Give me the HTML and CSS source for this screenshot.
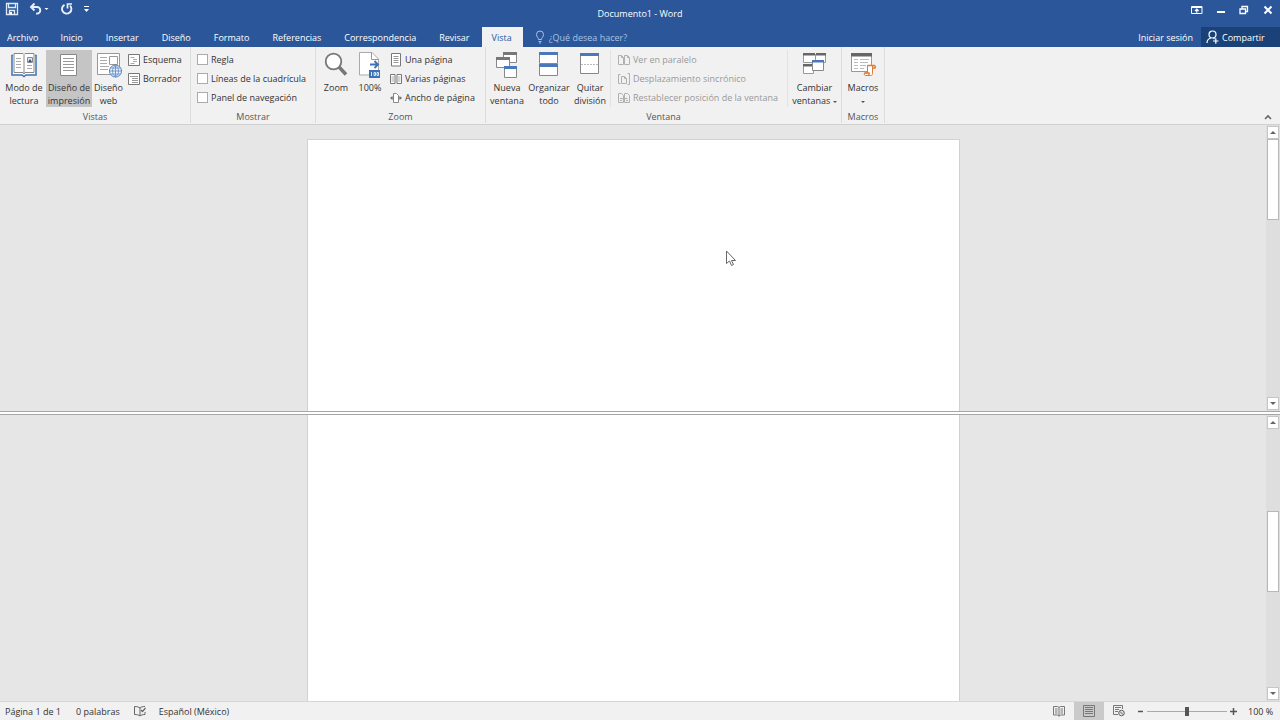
FILE: index.html
```html
<!DOCTYPE html>
<html lang="es">
<head>
<meta charset="utf-8">
<title>Documento1 - Word</title>
<link rel="stylesheet" href="styles.css">
</head>
<body>
<div class="app">
  <header class="titlebar">
    <div class="quick">
      <button class="tb" aria-label="Guardar"><svg width="14" height="14" viewBox="0 0 14 14"><path d="M1.500 1.500h11v11h-11z M3.500 1.500v4h7v-4 M4.500 12.500v-4h5v4" fill="none" stroke="#dfe8f6" stroke-width="1.300"/><path d="M5 10h2v2.500H5z" fill="#fff"/></svg></button>
      <button class="tb undo" aria-label="Deshacer"><svg width="20" height="14" viewBox="0 0 20 14"><path d="M2 5h6a3.300 3.300 0 0 1 0 6.600H7" fill="none" stroke="#e8effa" stroke-width="1.900"/><path d="M5.500 1.500 2 5l3.500 3.500" fill="none" stroke="#e8effa" stroke-width="1.900"/><path d="M15.500 6h4l-2 2z" fill="#fff"/></svg></button>
      <button class="tb redo" aria-label="Rehacer"><svg width="14" height="14" viewBox="0 0 14 14"><path d="M4.500 2.800A4.700 4.700 0 1 0 10 3.600" fill="none" stroke="#e8effa" stroke-width="1.900"/><path d="M7.500 6.500V2h4.500" fill="none" stroke="#e8effa" stroke-width="1.700"/></svg></button>
      <button class="tb" aria-label="Personalizar"><svg width="8" height="10" viewBox="0 0 8 10"><path d="M2 2.500h5" stroke="#fff"/><path d="M2 5h5L4.500 8z" fill="#fff"/></svg></button>
    </div>
    <h1 class="doc-title">Documento1 - Word</h1>
    <div class="window-controls">
      <button class="tb" aria-label="Opciones de la cinta"><svg width="12" height="10" viewBox="0 0 12 10"><path d="M.5 1.500h10.500v7H.5z M.5 2.500H11" fill="none" stroke="#fff"/><path d="M5.800 7.800V5 M4 6l1.800-1.800L7.600 6" fill="none" stroke="#fff" stroke-width="1.200"/></svg></button>
      <button class="tb" aria-label="Minimizar"><svg width="8" height="10" viewBox="0 0 8 10"><path d="M0 7h8" stroke="#fff" stroke-width="2"/></svg></button>
      <button class="tb" aria-label="Restaurar"><svg width="10" height="10" viewBox="0 0 10 10"><path d="M1 4h5.500v4.500H1z M3 4V1.500h5.500V6.500H6.500" fill="none" stroke="#fff" stroke-width="1.300"/></svg></button>
      <button class="tb" aria-label="Cerrar"><svg width="10" height="10" viewBox="0 0 10 10"><path d="m1.500 1.500 7 7 m0-7-7 7" stroke="#fff" stroke-width="2"/></svg></button>
    </div>
  </header>
  <nav class="tabs">
    <button class="tab file">Archivo</button>
    <button class="tab">Inicio</button>
    <button class="tab">Insertar</button>
    <button class="tab">Diseño</button>
    <button class="tab">Formato</button>
    <button class="tab">Referencias</button>
    <button class="tab">Correspondencia</button>
    <button class="tab">Revisar</button>
    <button class="tab active">Vista</button>
    <label class="tell"><svg width="10" height="14" viewBox="0 0 10 14"><path d="M3.500 9.500C3.500 7.500 1.500 7 1.500 4.500a3.500 3.500 0 0 1 7 0C8.500 7 6.500 7.500 6.500 9.500z M3.500 11.500h3 M4 13h2" fill="none" stroke="#a9c0e4"/></svg><input type="text" placeholder="¿Qué desea hacer?" aria-label="¿Qué desea hacer?"></label>
    <button class="tab signin">Iniciar sesión</button>
    <button class="share"><svg width="13" height="14" viewBox="0 0 13 14"><circle cx="6.500" cy="4.500" r="3.500" fill="none" stroke="#fff" stroke-width="1.200"/><path d="M1 13c0-3 2-4.500 4-5 M7.500 8l1 1 M7 11h5.500 M9.800 8.200v5.500" fill="none" stroke="#fff" stroke-width="1.200"/></svg>Compartir</button>
  </nav>
  <section class="ribbon">
    <div class="group g-views">
      <div class="tools">
        <button class="big w44"><svg width="26" height="26" viewBox="0 0 26 26"><path d="M2 3.500h-1v19.500h10l2 1.500 2-1.500h10V3.500h-1" fill="#fff" stroke="#3d72b5" stroke-width="1.500"/><path d="M3 1.500h9l1 1 1-1h9v19h-9l-1 1.500-1-1.500H3z" fill="#fff" stroke="#888"/><path d="M13 3v19" stroke="#888"/><path d="M5 6.500h5 M5 9.500h5 M5 12.500h5 M5 15.500h5 M16 13.500h5 M16 16.500h5" stroke="#aaa"/><path d="M16.500 5.500h5v5h-5z" fill="#dce8f5" stroke="#888"/><path d="m17 10 2-3 2 3z" fill="#24588f"/></svg><span>Modo de<br>lectura</span></button>
        <button class="big w46 pressed"><svg width="26" height="26" viewBox="0 0 26 26"><path d="M4.500 2.500h16v21h-16z" fill="#fff" stroke="#888"/><path d="M7 6.500h11 M7 9.500h11 M7 12.500h11 M7 15.500h11 M7 18.500h11" stroke="#999"/></svg><span>Diseño de<br>impresión</span></button>
        <button class="big w33"><svg width="26" height="26" viewBox="0 0 26 26"><path d="M1.500 1.500h22v21h-22z" fill="#fff" stroke="#999"/><path d="M4 5.500h7 M4 8.500h7 M4 11.500h7 M4 14.500h9 M4 17.500h8" stroke="#aaa"/><path d="M13.500 4.500h8v8h-8z" fill="#fff" stroke="#999"/><circle cx="19.500" cy="19" r="6" fill="#f2f6fb" stroke="#4b7fbd"/><path d="M13.500 19h12 M14.500 16h10 M14.500 22h10 M19.500 13v12 M19.500 13c-4 3-4 9 0 12 M19.500 13c4 3 4 9 0 12" fill="none" stroke="#6d98cc"/></svg><span>Diseño<br>web</span></button>
        <div class="stack">
          <button class="small"><svg width="12" height="12" viewBox="0 0 12 12"><path d="M.5.5h11v11H.5z" fill="#fff" stroke="#777"/><path d="M2.500 3.500h4 M5 5.500h4 M5 7.500h4 M2.500 9.500h4" stroke="#aaa"/></svg>Esquema</button>
          <button class="small"><svg width="12" height="12" viewBox="0 0 12 12"><path d="M.5.5h11v11H.5z" fill="#fff" stroke="#777"/><path d="M2 3.500h8 M4 5.500h6 M4 7.500h6 M4 9.500h6" stroke="#999"/></svg>Borrador</button>
        </div>
      </div>
      <div class="group-name">Vistas</div>
    </div>
    <div class="group g-show">
      <div class="tools">
        <div class="stack">
          <label class="check"><input type="checkbox">Regla</label>
          <label class="check"><input type="checkbox">Líneas de la cuadrícula</label>
          <label class="check"><input type="checkbox">Panel de navegación</label>
        </div>
      </div>
      <div class="group-name">Mostrar</div>
    </div>
    <div class="group g-zoom">
      <div class="tools">
        <button class="big w34"><svg width="26" height="26" viewBox="0 0 26 26"><path d="m16 15 7 7.500" stroke="#777" stroke-width="3.500"/><circle cx="10.500" cy="9.500" r="7.800" fill="#fff" stroke="#777" stroke-width="1.800"/></svg><span>Zoom</span></button>
        <button class="big w34"><svg width="26" height="26" viewBox="0 0 26 26"><path d="M2.500.5H15l6.500 6.500v16h-19z" fill="#fff" stroke="#aaa"/><path d="M14.500.5v7h7" fill="none" stroke="#999"/><path d="M13 12.500h8 M17.500 9l3.500 3.500-3.500 3.500" fill="none" stroke="#3d72b5" stroke-width="1.800"/><path d="M12 18h11v8H12z" fill="#3d72b5"/><path d="M14.500 20v4 M17 20.500h1.500v3H17z M20 20.500h1.500v3H20z" fill="none" stroke="#dce8f8"/></svg><span>100%</span></button>
        <div class="stack">
          <button class="small"><svg width="12" height="14" viewBox="0 0 12 14"><path d="M1.500.5h9v12.500h-9z" fill="#fff" stroke="#777"/><path d="M3.500 3.500h5 M3.500 5.500h5 M3.500 7.500h5 M3.500 9.500h5" stroke="#999"/></svg>Una página</button>
          <button class="small"><svg width="12" height="12" viewBox="0 0 12 12"><path d="M.5 1.500h4.500v9H.5z M7 1.500h4.500v9H7z" fill="#fff" stroke="#777"/><path d="M1.500 4h2.500 M1.500 6h2.500 M1.500 8h2.500 M8 4h2.500 M8 6h2.500 M8 8h2.500" stroke="#aaa"/></svg>Varias páginas</button>
          <button class="small"><svg width="12" height="12" viewBox="0 0 12 12"><path d="M3.500 1.500h3l2 2v7h-5z" fill="#fff" stroke="#888"/><path d="m0 6 2.500-2v4z M12 6 9.500 4v4z" fill="#666"/><path d="M1 6h3 M8 6h3" stroke="#777"/></svg>Ancho de página</button>
        </div>
      </div>
      <div class="group-name">Zoom</div>
    </div>
    <div class="group g-window">
      <div class="tools">
        <button class="big w42"><svg width="26" height="26" viewBox="0 0 26 26"><path d="M9.500 1.500h13v9h-13z" fill="#fff" stroke="#888"/><path d="M9 0h14v3H9z" fill="#777"/><path d="M2.500 6.500h13v9h-13z" fill="#fff" stroke="#888"/><path d="M2 5h14v3H2z" fill="#777"/><path d="M10.500 15.500h12v10h-12z" fill="#fff" stroke="#888"/><path d="M10 14h13v3H10z" fill="#4a79bb"/></svg><span>Nueva<br>ventana</span></button>
        <button class="big w42"><svg width="26" height="26" viewBox="0 0 26 26"><path d="M3.500 1.500h18v10h-18z M3.500 13.500h18v10h-18z" fill="#fff" stroke="#888"/><path d="M3 0h19v3H3z M3 12h19v3H3z" fill="#4a79bb"/></svg><span>Organizar<br>todo</span></button>
        <button class="big w40"><svg width="26" height="26" viewBox="0 0 26 26"><path d="M3.500 2.500h18v19h-18z" fill="#fff" stroke="#888"/><path d="M3 1h19v3H3z" fill="#4a79bb"/><path d="M4 12.500h17" stroke="#bbb" stroke-dasharray="2 1"/></svg><span>Quitar<br>división</span></button>
        <div class="stack">
          <button class="small" disabled><svg width="12" height="12" viewBox="0 0 12 12"><path d="M.5 1.500H3.500L5.500 3.500v7h-5z M6.500 1.500H9.500l2 2v7h-5z M3.500 1.500v2h2 M9.500 1.500v2h2" fill="none" stroke="#b0b0b0"/></svg>Ver en paralelo</button>
          <button class="small" disabled><svg width="12" height="12" viewBox="0 0 12 12"><path d="M2.500 1.500H.5v9h2 M3.500 3.500H6.500l2 2v5h-5z M6.500 3.500v2h2 M9.500.5h2 M11.500.5v11 M9.500 11.500h2" fill="none" stroke="#b0b0b0"/></svg>Desplazamiento sincrónico</button>
          <button class="small" disabled><svg width="12" height="12" viewBox="0 0 12 12"><path d="M.5 1.500H3.500L5.500 3.500v7h-5z M6.500 1.500H9.500l2 2v7h-5z M2 6.500h7.500 M2 8.500h2 M8 8.500h2" fill="none" stroke="#b0b0b0"/></svg>Restablecer posición de la ventana</button>
        </div>
        <button class="big w54 ruled"><svg width="26" height="26" viewBox="0 0 26 26"><path d="M1.500 2.500h12v8h-12z M13.500 2.500h10v8h-10z M1.500 13.500h10v8h-10z" fill="#fff" stroke="#999"/><path d="M1 1h12v2.500H1z M14 1h10v2.500H14z M1 12h10v2.500H1z" fill="#666"/><path d="M10.500 9.500h11v9h-11z" fill="#fff" stroke="#888"/><path d="M10 8h12v2.500H10z" fill="#4a79bb"/></svg><span>Cambiar<br>ventanas <i class="caret"></i></span></button>
      </div>
      <div class="group-name">Ventana</div>
    </div>
    <div class="group g-macros">
      <div class="tools">
        <button class="big w42"><svg width="26" height="26" viewBox="0 0 26 26"><path d="M1.500 1.500h20v18h-20z" fill="#fff" stroke="#999"/><path d="M1 1h21v3.500H1z" fill="#666"/><path d="M4 7.500h4 M10 7.500h9 M4 10.500h4 M10 10.500h8 M4 13.500h4 M10 13.500h6 M4 16.500h4 M10 16.500h4" stroke="#bbb"/><path d="M17.500 13.500h5v8c0 1.500-1 2-2 2h-5c-1 0-1.500-1-1-2.500h3z" fill="#fff" stroke="#e07b35"/><path d="M17.500 13.500h6.500c1 0 1.500 1 1 2.500h-2.500 M14.500 21h4.500v2" fill="none" stroke="#e07b35" stroke-width="1.500"/></svg><span>Macros<br><i class="caret"></i></span></button>
      </div>
      <div class="group-name">Macros</div>
    </div>
    <button class="collapse" aria-label="Contraer la cinta"><svg width="8" height="6" viewBox="0 0 8 6"><path d="M1 5l3-3 3 3" fill="none" stroke="#666" stroke-width="1.600"/></svg></button>
  </section>
  <main class="workspace">
    <section class="pane">
      <div class="canvas"><div class="page first"></div></div>
      <div class="scroll">
        <button class="arrow" aria-label="Subir"><i class="up"></i></button>
        <div class="track"><div class="thumb"></div></div>
        <button class="arrow" aria-label="Bajar"><i class="down"></i></button>
      </div>
    </section>
    <div class="splitter"></div>
    <section class="pane">
      <div class="canvas"><div class="page"></div></div>
      <div class="scroll">
        <button class="arrow" aria-label="Subir"><i class="up"></i></button>
        <div class="track lower"><div class="thumb"></div></div>
        <button class="arrow" aria-label="Bajar"><i class="down"></i></button>
      </div>
    </section>
    <svg class="pointer" width="12" height="18" viewBox="0 0 12 18"><path d="M1.500 1v12.500l3-2.500 2 4.500 2-1-2-4h4z" fill="#fff" stroke="#666"/></svg>
  </main>
  <footer class="status">
    <span class="s-page">Página 1 de 1</span>
    <span class="s-words">0 palabras</span>
    <button class="tb s-proof" aria-label="Revisión"><svg width="12" height="12" viewBox="0 0 12 12"><path d="M6 2.500v8.500 M6 3C5 2 3 1.500.5 1.500v8c2.500 0 4.500.5 5.500 1.500 1-1 2.500-1.500 5-1.500V7 M6 3c1-1 2.500-1.500 5-1.500" fill="none" stroke="#666"/><path d="m7 5 1.500 1.500L11.500 3" fill="none" stroke="#666" stroke-width="1.200"/></svg></button>
    <span class="s-lang">Español (México)</span>
    <div class="views">
      <button class="view" aria-label="Modo de lectura"><svg width="12" height="11" viewBox="0 0 12 11"><path d="M6 1.500v9 M.5.500h4L6 1.500 7.500.500h4v8.500h-4L6 10 4.500 9h-4z M2 3h2.500 M2 5h2.500 M2 7h2.500 M7.500 3H10 M7.500 5H10 M7.500 7H10" fill="none" stroke="#777"/></svg></button>
      <button class="view on" aria-label="Diseño de impresión"><svg width="12" height="12" viewBox="0 0 12 12"><path d="M.5.500h11v11H.5z M2 2.500h8 M2 4.500h8 M2 6.500h8 M2 8.500h8" fill="none" stroke="#777"/></svg></button>
      <button class="view" aria-label="Diseño web"><svg width="12" height="12" viewBox="0 0 12 12"><path d="M5 9.500H.5v-9h9V4 M2 2.500h6 M2 4.500h4 M2 6.500h3" fill="none" stroke="#777"/><circle cx="8.500" cy="8" r="2.800" fill="#ddd" stroke="#666"/><path d="M7 6.500 10 9.500" stroke="#666"/></svg></button>
    </div>
    <button class="tb sign minus" aria-label="Alejar"><svg width="7" height="7" viewBox="0 0 7 7"><path d="M1 3.500h5" stroke="#555" stroke-width="1.500"/></svg></button>
    <input class="zoom" type="range" min="0" max="100" value="50" aria-label="Zoom">
    <button class="tb sign" aria-label="Acercar"><svg width="7" height="7" viewBox="0 0 7 7"><path d="M0 3.500h7 M3.500 0v7" stroke="#555" stroke-width="1.500"/></svg></button>
    <span class="s-zoom">100 %</span>
  </footer>
</div>
</body>
</html>
```
FILE: styles.css
```css
* { box-sizing: border-box; }
body { margin: 0; font: 9px/13px "Open Sans", "Noto Sans", sans-serif; color: #333; }
button, input { font: inherit; color: inherit; margin: 0; padding: 0; border: 0; background: none; }
button { white-space: nowrap; }
svg { display: block; flex: none; }
.app { display: flex; flex-direction: column; height: 100vh; background: #e6e6e6; overflow: hidden; }

.titlebar { display: grid; grid-template-columns: 1fr auto 1fr; height: 27px; background: #2b579a; color: #fff; }
.tb { display: flex; align-items: center; }
.quick { display: flex; align-items: center; height: 18px; padding-left: 5px; }
.undo { margin-left: 10px; }
.redo { margin: 0 8px 0 11px; }
.doc-title { margin: 0; font-size: 9px; font-weight: 400; line-height: 28px; }
.window-controls { display: flex; align-items: center; justify-content: flex-end; gap: 14px; height: 19px; padding-right: 7px; }

.tabs { display: flex; height: 20px; background: #2b579a; color: #fff; }
.tab { padding: 0 12px 0 11px; }
.tab.file { padding: 0 11px 0 7px; }
.tab.active { padding: 0 11px 0 10px; background: #f1f1f1; color: #2b579a; }
.tell { display: flex; align-items: center; gap: 4px; flex: 1; padding-left: 12px; }
.tell input { width: 120px; outline: 0; }
.tell input::placeholder { color: #a9c0e4; opacity: 1; }
.tab.signin { padding: 0 8px; }
.share { display: flex; align-items: center; gap: 3px; width: 79px; padding-left: 5px; background: #1a4278; }

.ribbon { display: flex; height: 78px; background: #f1f1f1; border-bottom: 1px solid #d0d0d0; }
.group { display: flex; flex-direction: column; flex: none; margin-bottom: 1px; border-right: 1px solid #dcdcdc; padding-top: 3px; }
.tools { display: flex; align-items: flex-start; flex: none; height: 60px; }
.group-name { text-align: center; color: #555; line-height: 13px; }
.g-views { width: 191px; }
.g-views .tools { padding-left: 2px; }
.g-show { width: 125px; }
.g-show .tools { padding-left: 6px; }
.g-zoom { width: 170px; }
.g-zoom .tools { padding-left: 3px; }
.g-window { width: 356px; }
.g-macros { width: 43px; }
.big { display: flex; flex-direction: column; align-items: center; gap: 3px; height: 57px; padding-top: 2px; line-height: 13px; flex: none; }
.w33 { width: 33px; }
.w34 { width: 34px; }
.w40 { width: 40px; }
.w42 { width: 42px; }
.w44 { width: 44px; }
.w46 { width: 46px; }
.w54 { width: 54px; }
.pressed { background: #c5c5c5; }
.stack { display: flex; flex-direction: column; padding-left: 3px; }
.small, .check { display: flex; align-items: center; gap: 3px; height: 19px; white-space: nowrap; }
.small:disabled { color: #999; }
.check input { appearance: none; width: 11px; height: 11px; border: 1px solid #ababab; background: #fff; }
.g-show .stack { padding-left: 0; }
.g-window .stack { width: 177px; padding-left: 7px; border-left: 1px solid #e2e2e2; }
.big.ruled { border-left: 1px solid #e2e2e2; }
.caret { display: inline-block; vertical-align: middle; border: 2px solid transparent; border-top-color: #555; border-bottom: 0; }
.collapse { margin: auto 7px 2px auto; padding: 2px 1px; }

.workspace { position: relative; display: flex; flex-direction: column; flex: 1; min-height: 0; }
.pane { display: flex; flex: 1; min-height: 0; }
.canvas { display: flex; justify-content: center; flex: 1; }
.page { width: 653px; background: #fff; border: solid #d2d2d2; border-width: 0 1px; }
.page.first { margin-top: 14px; border-top-width: 1px; }
.splitter { height: 4px; background: #fff; border: solid #a6a6a6; border-width: 1px 0; }
.scroll { display: flex; flex-direction: column; width: 14px; padding: 1px; background: #dedede; }
.arrow { display: flex; align-items: center; justify-content: center; height: 13px; background: #fff; border: 1px solid #c6c6c6; }
.up, .down { border: 3px solid transparent; }
.up { border-top: 0; border-bottom-color: #666; }
.down { border-bottom: 0; border-top-color: #666; }
.track { display: flex; flex-direction: column; flex: 1; }
.track.lower { padding-top: 82px; }
.thumb { height: 81px; background: #fff; border: 1px solid #b8b8b8; }
.pointer { position: absolute; left: 725px; top: 125px; }

.status { display: flex; align-items: center; height: 19px; padding: 0 5px; background: #f1f1f1; border-top: 1px solid #d6d6d6; white-space: nowrap; }
.s-words { margin-left: 15px; }
.s-proof { margin: 0 13px 0 14px; }
.views { display: flex; align-self: stretch; margin-left: auto; }
.view { display: flex; align-items: center; justify-content: center; width: 30px; }
.view.on { background: #cacaca; }
.sign.minus { margin-left: 3px; }
.zoom { appearance: none; width: 80px; height: 13px; margin: 0 3px; background: linear-gradient(#aaa, #aaa) center / 100% 1px no-repeat; }
.zoom::-webkit-slider-thumb { appearance: none; width: 4px; height: 9px; background: #555; }
.s-zoom { width: 27px; margin-left: 11px; }
```
